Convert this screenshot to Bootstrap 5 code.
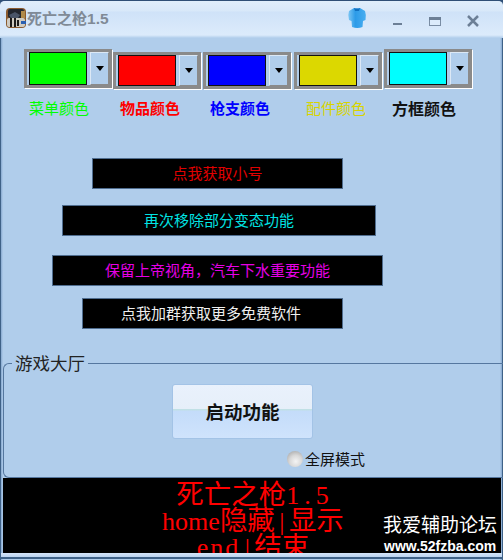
<!DOCTYPE html>
<html lang="zh">
<head>
<meta charset="utf-8">
<title>死亡之枪1.5</title>
<link href="https://cdn.jsdelivr.net/npm/bootstrap@5.3.0/dist/css/bootstrap.min.css" rel="stylesheet">
<style>
html,body{margin:0;height:560px;overflow:hidden;background:#2f4f76}
body{font-family:"Noto Sans CJK SC","Liberation Sans",sans-serif}
.app-win{width:503px;height:560px;background:linear-gradient(to right,#3f6288 0,#3f6288 1px,#86a8cf 1px,#b0cdeb 3px,#b0cdeb 500px,#86a8cf 502px,#3f6288 502px);border-top:1px solid #2f4f76;border-radius:5px 5px 0 0;overflow:hidden}
.app-title{height:37px;padding-left:6px;background:linear-gradient(#e0eefb 0,#d8e8f9 10px,#cfe2f8 11px,#dcebfb 34px,#b0cdeb 37px);color:#808a96;font-size:15px;font-weight:700}
.app-ico{width:20px;height:20px;margin-top:-4px}
.app-tname{margin-left:1px;margin-top:-2px}
.app-tname b{font-family:"Liberation Sans",sans-serif;font-size:15.500px}
.app-shirt{width:20px;height:22px;margin-left:auto;margin-top:-4px}
.app-ctl{width:14px;height:12px;margin-top:2px}
.pick-row{padding-left:24px;height:61px}
.picker{width:88px;height:39px;border:3px solid #8a8a8a;box-shadow:1px 1px 0 #fff;padding:0 0 0 2px;display:flex;gap:3px}
.picker-hi{margin-top:11px}
.picker-lo{margin-top:14px;margin-left:1px;height:37px}
.swatch{width:59px;height:33px;border:1px solid #111}
.picker-lo .swatch{height:31px;margin-top:0}
.drop{width:19px;border:1px solid #8a8a8a;border-top-color:#dce8f5;border-left-color:#dce8f5;background:#b0cdeb;display:flex;align-items:center;justify-content:center}
.drop i{display:block;border:4px solid transparent;border-top:5px solid #000;border-bottom:0}
.tag-row{height:32px;font-size:15px;line-height:32px;margin-top:-7px}
.tag{width:61px;white-space:nowrap}
.strong-tag{font-weight:700}
.act{height:31px;background:#000;border:1px solid #4f6d8f;font-size:15px;line-height:28px;text-align:center;white-space:nowrap}
.act-1{width:251px;margin:34px 0 0 92px}
.act-2{width:314px;margin:16px 0 0 62px}
.act-3{width:331px;margin:19px 0 0 52px}
.act-4{width:261px;margin:12px 0 0 82px;text-indent:-3px}
.hall{position:relative;height:115px;margin:34px 0 0 3px;border:1px solid #55779f;border-right:0;border-radius:6px 0 0 6px;padding-top:20px}
.hall-name{position:absolute;left:8px;top:-13px;padding:0 3px;background:#b0cdeb;font-size:17.500px;line-height:24px;color:#222}
.start{display:block;width:141px;height:55px;margin-left:168px;padding:0;border:1px solid #a3c3e6;border-radius:3px;background:linear-gradient(#e9f1fc 0,#e6eff9 45%,#c0e0e4 46%,#c4dcfa 50%,#cfe3fc 100%);font-size:18.500px;font-weight:700;color:#111}
.mode{margin:11px 0 0 283px;font-size:15px;line-height:18px;color:#111}
.mode i{display:block;width:16px;height:16px;border-radius:50%;background:radial-gradient(circle at 55% 65%,#f4f4f4 0,#d8d8d8 45%,#9a9a9a 100%);margin-right:2px}
.board{position:relative;height:75px;margin:0 2px 0 3px;background:#000;overflow:hidden;color:#f00;font-size:27.500px;text-align:center;padding-left:2px}
.board-ln{height:26px;line-height:26px;white-space:nowrap}
.board-ln:first-child{margin-top:1px;padding-left:4px}
.lat{font-family:"Liberation Serif",serif;font-size:26px}
.lat-wide{letter-spacing:5px}
.lat-mid{letter-spacing:2px}
.lat-bar{display:inline-block;width:14px;text-align:center;font-size:26px;font-family:"Liberation Serif",serif}
.mark-site{position:absolute;right:4px;bottom:-2px;color:#fff;width:114px;text-align:left}
.mark-a{font-size:19px;line-height:28px;white-space:nowrap}
.mark-b{font-family:"Liberation Sans",sans-serif;font-weight:700;font-size:14px;line-height:17px;white-space:nowrap;padding-left:1px}
.foot{height:6px;background:linear-gradient(#d5e5f8,#b9d2ef);border-bottom:2px solid #3f6288;margin:0 1px}
</style>
</head>
<body>
<div class="app-win">
  <div class="app-title d-flex align-items-center">
    <svg class="app-ico" viewBox="0 0 20 20"><rect width="20" height="20" rx="4" fill="#8a5a2e"/><rect x="2" y="1" width="16" height="9" rx="2" fill="#23272f"/><rect x="1" y="10" width="18" height="9" rx="2" fill="#cfcbc2"/><path d="M3 7l6-3 5 3-2 3H5z" fill="#4a5568"/><path d="M4 10h2v9H4zM8 10h2v9H8zM11 12h2v6h-2z" fill="#1d1b1a"/><rect x="15" y="3" width="4" height="7" fill="#b08a4a"/><rect x="15" y="13" width="5" height="3" fill="#2a5fb0"/></svg>
    <span class="app-tname">死亡之枪<b>1.5</b></span>
    <svg class="app-shirt" viewBox="0 0 20 22"><defs><linearGradient id="sg" x1="0" x2="1"><stop offset="0" stop-color="#7cc6f4"/><stop offset=".4" stop-color="#2c9be8"/><stop offset="1" stop-color="#4aaef0"/></linearGradient></defs><path d="M7 1q3 1 6 0l5 3q1.500 4 .5 9l-2.500 1-.5 6q-5 2-10.500 0l-.5-6L2 13Q.5 8 2 4z" fill="url(#sg)"/><path d="M7 1q3 1 6 0l-1 3H8z" fill="#0f6fbf"/></svg>
    <svg class="app-ctl" style="margin-left:23px" viewBox="0 0 14 12"><rect x="3" y="8" width="9" height="2" fill="#6c7f96"/></svg>
    <svg class="app-ctl" style="margin-left:24px" viewBox="0 0 14 12"><rect x="1.500" y="2.500" width="11" height="8" fill="#dcebfb" stroke="#7a8da4"/><rect x="1" y="2" width="12" height="3" fill="#6c7f96"/></svg>
    <svg class="app-ctl" style="margin-left:24px;margin-right:23px" viewBox="0 0 14 12"><path d="M2 1l10 10M12 1L2 11" stroke="#6c7f96" stroke-width="2.500"/></svg>
  </div>
  <div class="pick-row d-flex">
    <div class="picker picker-hi"><div class="swatch" style="background:#0f0"></div><div class="drop"><i></i></div></div>
    <div class="picker picker-lo"><div class="swatch" style="background:#f00"></div><div class="drop"><i></i></div></div>
    <div class="picker picker-lo" style="margin-left:2px"><div class="swatch" style="background:#00f"></div><div class="drop"><i></i></div></div>
    <div class="picker picker-lo" style="margin-left:3px"><div class="swatch" style="background:#dcd800"></div><div class="drop"><i></i></div></div>
    <div class="picker picker-hi" style="margin-left:2px"><div class="swatch" style="background:#0ff"></div><div class="drop"><i></i></div></div>
  </div>
  <div class="tag-row d-flex">
    <span class="tag" style="margin-left:29px;color:#0f0">菜单颜色</span>
    <span class="tag strong-tag" style="margin-left:30px;color:#f00">物品颜色</span>
    <span class="tag strong-tag" style="margin-left:29px;color:#00f">枪支颜色</span>
    <span class="tag" style="margin-left:35px;color:#d8d400">配件颜色</span>
    <span class="tag strong-tag" style="margin-left:25px;color:#111;font-size:16px">方框颜色</span>
  </div>
  <div class="act act-1" style="color:#e00000">点我获取小号</div>
  <div class="act act-2" style="color:#00e4e4">再次移除部分变态功能</div>
  <div class="act act-3" style="color:#e600e6">保留上帝视角，汽车下水重要功能</div>
  <div class="act act-4" style="color:#eee">点我加群获取更多免费软件</div>
  <div class="hall">
    <div class="hall-name">游戏大厅</div>
    <button type="button" class="btn start">启动功能</button>
    <div class="mode d-flex align-items-center"><i></i><span>全屏模式</span></div>
  </div>
  <div class="board">
    <div class="board-ln">死亡之枪<span class="lat lat-wide">1.5</span></div>
    <div class="board-ln"><span class="lat">home</span>隐藏<span class="lat-bar">|</span>显示</div>
    <div class="board-ln"><span class="lat lat-mid">end</span><span class="lat-bar">|</span>结束</div>
    <div class="mark-site"><div class="mark-a">我爱辅助论坛</div><div class="mark-b">www.52fzba.com</div></div>
  </div>
  <div class="foot"></div>
</div>
<script src="https://cdn.jsdelivr.net/npm/bootstrap@5.3.0/dist/js/bootstrap.bundle.min.js"></script>
</body>
</html>
